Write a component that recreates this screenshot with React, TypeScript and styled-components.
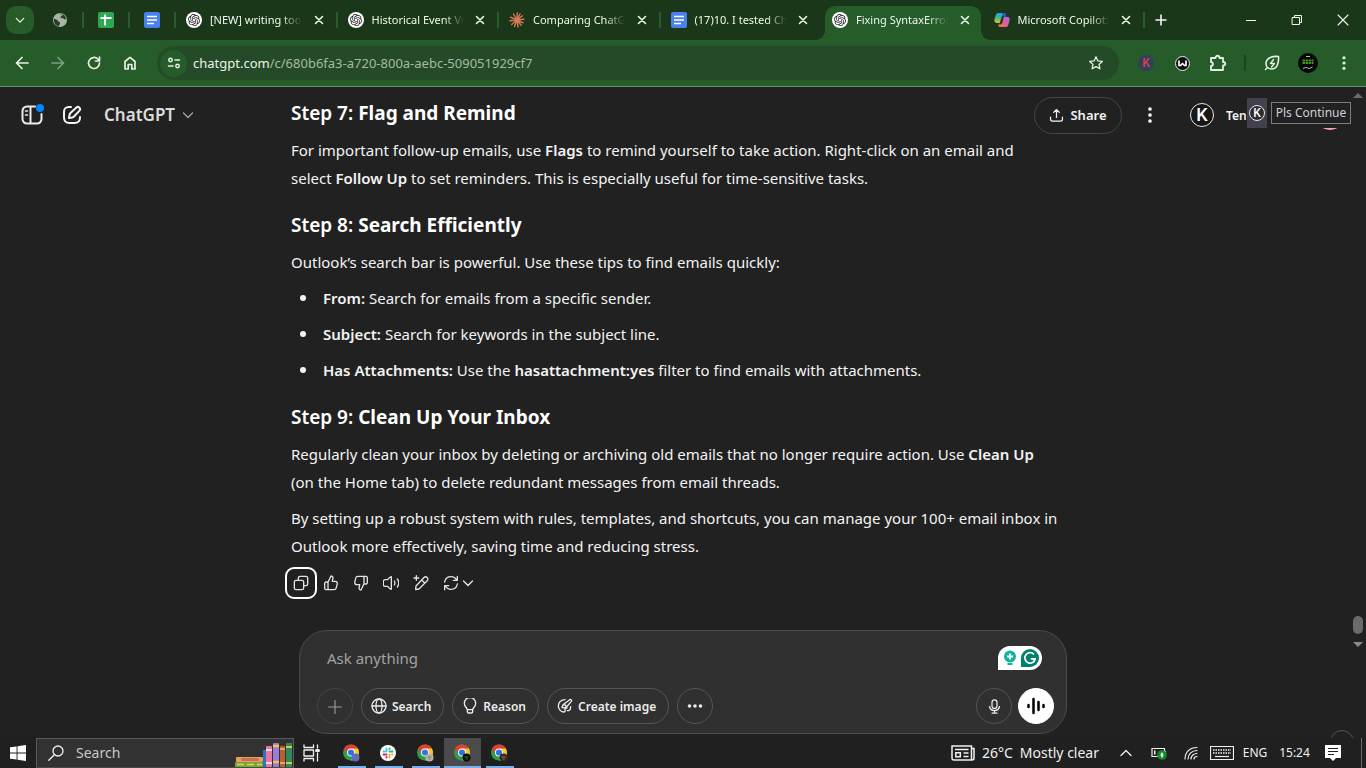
import React from "react";
import styled, { createGlobalStyle, css } from "styled-components";
import { SiOpenai } from "react-icons/si";

const GlobalStyle = createGlobalStyle`
  *, *::before, *::after { box-sizing: border-box; }
  body { margin: 0; background: #212121; font-family: "Noto Sans", "Open Sans", sans-serif; color: #f3f3f3; }
  button, input, textarea { font: inherit; color: inherit; margin: 0; padding: 0; border: 0; background: none; }
  textarea, input { outline: none; }
  svg { display: block; flex: none; }
  h3, p, ul { margin: 0; padding: 0; }
`;

const Screen = styled.div`
  display: flex;
  flex-direction: column;
  height: 100vh;
  overflow: hidden;
`;

/* ---------- browser chrome ---------- */

const TabStrip = styled.div`
  display: flex;
  align-items: stretch;
  height: 40px;
  flex: none;
  padding-left: 6px;
  background: #1b371a;
`;

const TabSearch = styled.button`
  display: grid;
  place-items: center;
  width: 28px;
  height: 28px;
  margin: 6px 4px 0 0;
  border-radius: 10px;
  background: #265c2a;
`;

const separator = css`
  &::after {
    content: "";
    flex: none;
    width: 2px;
    height: 16px;
    background: #2a5a2d;
  }
`;

const PinnedTab = styled.button`
  display: flex;
  align-items: center;
  justify-content: space-between;
  width: 46px;
  flex: none;
  padding-left: 14px;
  ${separator}
`;

const TabList = styled.div`
  display: flex;
  flex: 0 1 969px;
  min-width: 0;
`;

const Tab = styled.div<{ $active?: boolean; $bare?: boolean }>`
  position: relative;
  z-index: 0;
  display: flex;
  align-items: center;
  gap: 8px;
  flex: 1 1 0;
  min-width: 0;
  padding-left: 10px;
  font-size: 11px;
  line-height: 16px;
  color: #eef7ec;
  ${separator}
  ${(p) => (p.$bare || p.$active) && css`&::after { background: transparent; }`}
  ${(p) =>
    p.$active &&
    css`
      &::before {
        content: "";
        position: absolute;
        z-index: -1;
        inset: 6px 3px 0;
        border-radius: 10px 10px 0 0;
        background: #265c2a;
      }
    `}
`;

const TabFoot = styled.span<{ $side: "left" | "right" }>`
  position: absolute;
  z-index: -1;
  bottom: 0;
  ${(p) => p.$side}: -7px;
  width: 10px;
  height: 10px;
  background: radial-gradient(circle at ${(p) => p.$side} top, transparent 10px, #265c2a 10px);
`;

const TabTitle = styled.button`
  flex: 1;
  min-width: 0;
  overflow: hidden;
  white-space: nowrap;
  text-align: left;
  mask-image: linear-gradient(90deg, #000 72px, transparent 92px);
`;

const CloseTab = styled.button`
  display: grid;
  place-items: center;
  width: 16px;
  height: 16px;
  flex: none;
`;

const TabClose = styled(CloseTab)`
  margin-right: 1px;
`;

const NewTab = styled(CloseTab)`
  width: 32px;
  height: 40px;
`;

const WindowControls = styled.div`
  display: flex;
  margin-left: auto;
`;

const WindowButton = styled.button`
  display: grid;
  place-items: center;
  width: 46px;
  height: 40px;
`;

const Toolbar = styled.div`
  display: flex;
  align-items: center;
  height: 47px;
  flex: none;
  padding: 0 4px;
  background: #265c2a;
  border-bottom: 1px solid #6f8b70;
  color: #e6f1e3;
`;

const ToolButton = styled.button<{ $dim?: boolean }>`
  display: grid;
  place-items: center;
  width: 36px;
  height: 36px;
  flex: none;
  opacity: ${(p) => (p.$dim ? 0.45 : 1)};
`;

const Omnibox = styled.div`
  display: flex;
  align-items: center;
  flex: 1;
  min-width: 0;
  height: 34px;
  margin: 0 9px;
  padding: 0 15px 0 3px;
  border-radius: 17px;
  background: #244a28;
  font-size: 13px;
  line-height: 20px;
`;

const SiteInfo = styled.button`
  display: grid;
  place-items: center;
  width: 27px;
  height: 27px;
  margin-right: 6px;
  border-radius: 50%;
  background: #265c2a;
`;

const Address = styled.div`
  flex: 1;
  color: #a3bba3;
  b { font-weight: 400; color: #eaf4e8; }
`;

const Extensions = styled.div`
  display: flex;
  align-items: center;
`;

const Divider = styled.span`
  width: 2px;
  height: 16px;
  margin: 0 8px;
  background: #1d4420;
`;

const Badge = styled.span<{ $bg: string; $fg: string; $size: number; $ring?: boolean }>`
  display: grid;
  place-items: center;
  flex: none;
  width: ${(p) => p.$size}px;
  height: ${(p) => p.$size}px;
  border-radius: 50%;
  border: ${(p) => (p.$ring ? "1px solid #e8e8e8" : "0")};
  background: ${(p) => p.$bg};
  color: ${(p) => p.$fg};
  font: 500 ${(p) => (p.$size > 20 ? 18 : 12)}px/1 Roboto, sans-serif;
`;

/* ---------- page ---------- */

const Main = styled.main`
  display: grid;
  grid-template: minmax(0, 1fr) / minmax(0, 1fr);
  flex: 1;
  min-height: 0;
  position: relative;
  overflow: hidden;
  > * { grid-area: 1 / 1; }
`;

const ScrollArea = styled.div`
  display: flex;
  padding-bottom: 89px;
  min-height: 0;
`;

const Thread = styled.article`
  flex: 1;
  padding-top: 13px;
  > * {
    max-width: 768px;
    margin-left: auto;
    margin-right: auto;
  }
`;

const Heading = styled.h3`
  margin-bottom: 10px;
  font-size: 19px;
  line-height: 26px;
  font-weight: 600;
  color: #fff;
  * + & { margin-top: 20px; }
  strong { font-weight: 700; }
`;

const Para = styled.p`
  font-size: 15px;
  line-height: 28px;
  & + & { margin-top: 8px; }
  strong { font-weight: 600; }
`;

const Bullets = styled.ul`
  list-style: none;
`;

const Bullet = styled.li`
  display: flex;
  align-items: center;
  margin-top: 8px;
  font-size: 15px;
  line-height: 28px;
  strong { font-weight: 600; }
  &::before {
    content: "";
    width: 6px;
    height: 6px;
    margin: 0 17px 0 9px;
    border-radius: 50%;
    background: #f3f3f3;
  }
`;

const Actions = styled.div`
  display: flex;
  padding-top: 8px;
  color: #e3e3e3;
`;

const ActionButton = styled.button<{ $focused?: boolean }>`
  display: flex;
  align-items: center;
  gap: 3px;
  height: 30px;
  padding: 0 7px;
  border-radius: 8px;
  outline: ${(p) => (p.$focused ? "2px solid #fff" : "0")};
  outline-offset: -1px;
  &:first-child { margin-left: -5px; }
`;

const Scrollbar = styled.div`
  display: flex;
  flex-direction: column;
  align-items: center;
  width: 16px;
  padding: 6px 0 2px;
  &::before, &::after {
    content: "";
    border: 5px solid transparent;
    border-top-width: 0;
    border-bottom-color: #6b6b6b;
  }
  &::after {
    border-top: 5px solid #8a8a8a;
    border-bottom-width: 0;
  }
`;

const Thumb = styled.span`
  width: 10px;
  height: 18px;
  margin: auto 0 8px;
  border-radius: 5px;
  background: #6b6b6b;
`;

const Header = styled.header`
  display: flex;
  align-items: center;
  align-self: start;
  height: 56px;
  padding: 0 21px 0 12px;
  pointer-events: none;
  button { pointer-events: auto; }
`;

const IconButton = styled.button`
  display: grid;
  place-items: center;
  width: 40px;
  height: 36px;
  flex: none;
`;

const ModelButton = styled.button`
  display: flex;
  align-items: center;
  gap: 7px;
  padding-left: 12px;
  font-size: 17px;
  line-height: 24px;
  font-weight: 600;
  color: #dcdcdc;
  svg { color: #a0a0a0; }
`;

const ShareButton = styled.button`
  display: flex;
  align-items: center;
  justify-content: center;
  gap: 6px;
  width: 88px;
  height: 37px;
  margin: 0 8px 0 auto;
  border: 1px solid #454545;
  border-radius: 19px;
  font-size: 13px;
  font-weight: 600;
`;

const AccountButton = styled.button`
  display: flex;
  align-items: center;
  gap: 12px;
  width: 135px;
  padding-left: 10px;
  margin-left: 10px;
  font-size: 12px;
  font-weight: 600;
`;

const AccountName = styled.span`
  width: 21px;
  overflow: hidden;
  white-space: nowrap;
  text-align: left;
`;

const Avatar = styled.span`
  width: 30px;
  height: 30px;
  border-radius: 50%;
  background: #f0a0c8;
`;

const Snippet = styled.div`
  position: absolute;
  top: 11px;
  right: 15px;
  display: flex;
  align-items: center;
  gap: 4px;
  height: 30px;
  background: #212121;
`;

const SnippetIcon = styled.button`
  display: grid;
  place-items: center;
  width: 20px;
  height: 30px;
  background: #43424c;
`;

const SnippetText = styled.button`
  width: 80px;
  height: 22px;
  border: 1px solid #7c7c80;
  font-size: 12px;
  line-height: 20px;
  white-space: nowrap;
  color: #cfd0dc;
`;

const HelpButton = styled.button`
  position: absolute;
  right: 12px;
  bottom: -16px;
  width: 24px;
  height: 24px;
  border: 1px solid #555;
  border-radius: 50%;
`;

const Composer = styled.form`
  align-self: end;
  justify-self: center;
  display: flex;
  flex-direction: column;
  justify-content: space-between;
  width: 100%;
  max-width: 768px;
  height: 104px;
  margin-bottom: 4px;
  padding: 15px 12px 9px 17px;
  border: 1px solid #4c4c4c;
  border-radius: 28px;
  background: #303030;
`;

const PromptRow = styled.div`
  display: flex;
  justify-content: space-between;
  padding: 0 12px 0 10px;
`;

const Prompt = styled.textarea`
  flex: 1;
  height: 24px;
  resize: none;
  overflow: hidden;
  font-size: 15px;
  line-height: 24px;
  &::placeholder { color: #a3a3a3; opacity: 1; }
`;

const Grammar = styled.button`
  display: flex;
  align-items: center;
  justify-content: space-between;
  width: 44px;
  height: 24px;
  padding: 0 3px 0 5px;
  border-radius: 12px 12px 12px 0;
  background: #fff;
`;

const ToolRow = styled.div`
  display: flex;
  gap: 8px;
`;

const Pill = styled.button<{ $round?: boolean; $solid?: boolean }>`
  display: flex;
  align-items: center;
  justify-content: center;
  gap: 5px;
  height: 36px;
  width: ${(p) => (p.$round ? "36px" : "auto")};
  padding: ${(p) => (p.$round ? 0 : "0 12px 0 9px")};
  border: 1px solid ${(p) => (p.$solid ? "#fff" : "#555")};
  border-radius: 18px;
  background: ${(p) => (p.$solid ? "#fff" : "transparent")};
  color: ${(p) => (p.$solid ? "#000" : "#ececec")};
  font-size: 12px;
  font-weight: 600;
  white-space: nowrap;
`;

const AttachPill = styled(Pill)`
  border-color: #444;
  color: #9a9a9a;
  padding-top: 2px;
`;

const VoiceGroup = styled.div`
  display: flex;
  gap: 6px;
  margin-left: auto;
`;

/* ---------- taskbar ---------- */

const Taskbar = styled.footer`
  display: flex;
  align-items: stretch;
  height: 30px;
  flex: none;
  background: #202020;
  color: #f0f0f0;
`;

const TaskButton = styled.button<{ $w: number }>`
  display: grid;
  place-items: center;
  flex: none;
  width: ${(p) => p.$w}px;
`;

const TaskView = styled.button`
  display: flex;
  align-items: center;
  flex: none;
  width: 39px;
  padding-left: 8px;
`;

const TaskSearch = styled.label`
  display: flex;
  align-items: center;
  gap: 12px;
  width: 258px;
  padding-left: 11px;
  border: 1px solid #5a5a5a;
  border-bottom-color: #4a4a4a;
  background: #323232;
  font-size: 14px;
  line-height: 20px;
  input { flex: 1; min-width: 0; }
  input::placeholder { color: #c9c9c9; opacity: 1; }
`;

const RunningApp = styled.button<{ $active?: boolean }>`
  display: grid;
  place-items: center;
  width: 37px;
  padding-right: 1px;
  background:
    linear-gradient(#76b0ee, #76b0ee) bottom / ${(p) => (p.$active ? "100%" : "28px")} 2px no-repeat,
    ${(p) => (p.$active ? "#4b4b4b" : "transparent")};
`;

const Tray = styled.div`
  display: flex;
  align-items: center;
  margin-left: auto;
  padding-right: 4px;
`;

const Weather = styled.button`
  display: flex;
  align-items: center;
  gap: 7px;
  padding-right: 9px;
  font-size: 14px;
  line-height: 20px;
  white-space: nowrap;
`;

const TrayText = styled.button<{ $w: number }>`
  width: ${(p) => p.$w}px;
  font-size: 12px;
  line-height: 20px;
`;

const ShowDesktop = styled.span`
  width: 1px;
  height: 30px;
  margin-left: 9px;
  background: #6a6a6a;
`;

/* ---------- icons ---------- */

type LineProps = { size?: number; w?: number; children: React.ReactNode; box?: number };
const Line = ({ size = 18, w = 2, box = 24, children }: LineProps) => (
  <svg width={size} height={size} viewBox={`0 0 ${box} ${box}`} fill="none" stroke="currentColor" strokeWidth={w} strokeLinecap="round" strokeLinejoin="round" aria-hidden="true">
    {children}
  </svg>
);

const Cross = () => <Line size={12} box={12} w={1.6}><path d="M2.5 2.5l7 7M9.5 2.5l-7 7" /></Line>;
const Chevron = ({ size = 12 }: { size?: number }) => <Line size={size} box={12} w={1.4}><path d="M1.500 4L6 8.500 10.500 4" /></Line>;
const Dots = ({ size = 14 }: { size?: number }) => (
  <svg width={size} height={size} viewBox="0 0 20 20" fill="currentColor"><circle cx="10" cy="2.500" r="2.300" /><circle cx="10" cy="10" r="2.300" /><circle cx="10" cy="17.500" r="2.300" /></svg>
);

const GptIcon = () => (
  <Badge $bg="#fff" $fg="#222" $size={16}><SiOpenai size={12} /></Badge>
);
const DocsIcon = () => (
  <svg width="16" height="16" viewBox="0 0 16 16"><rect width="16" height="16" rx="2" fill="#4a80ee" /><path d="M3 4.500h10M3 8h10M3 11.500h7" stroke="#fff" strokeWidth="1.700" /></svg>
);
const SheetsIcon = () => (
  <svg width="16" height="16" viewBox="0 0 16 16"><rect width="16" height="16" rx="2" fill="#2fa650" /><path d="M2.500 6h11M7 2.500v11" stroke="#fff" strokeWidth="1.800" /></svg>
);
const GlobeIcon = () => (
  <svg width="16" height="16" viewBox="0 0 16 16"><circle cx="8" cy="8" r="7" fill="#a9b3a8" /><path d="M2 7c2 0 3 .5 4 2s2 .5 2 2-1 1.500-1 3.200C4 14 1.500 11.500 2 7zM7 2c1 .5 3 0 4 .8-.5 1.200-2 1-2.500 2.200s1.500 1.200 2.500 1.200 1.500 1.500 3 1.300C14 4 11 1.200 7 2z" fill="#24402a" /></svg>
);
const ClaudeIcon = () => (
  <svg width="16" height="16" viewBox="0 0 16 16" stroke="#d97757" strokeWidth="1.400" strokeLinecap="round">
    <path d="M8 8L8.300 1M8 8l3-6M8 8l5.500-4.200M8 8l7-.8M8 8l6.200 2.800M8 8l4.200 5.200M8 8l1 7M8 8l-2.500 6.500M8 8l-5.300 4.500M8 8l-7 .8M8 8L1.500 5.200M8 8L4.500 2" />
  </svg>
);
const CopilotIcon = () => (
  <svg width="16" height="16" viewBox="0 0 18 16">
    <defs>
      <linearGradient id="cpA" x1="0" y1="0" x2="0" y2="1"><stop offset="0" stopColor="#1aa4f0" /><stop offset=".5" stopColor="#47b88a" /><stop offset="1" stopColor="#f5b824" /></linearGradient>
      <linearGradient id="cpB" x1="1" y1="0" x2="0" y2="1"><stop offset="0" stopColor="#a46bf0" /><stop offset=".5" stopColor="#e85a9c" /><stop offset="1" stopColor="#f5793b" /></linearGradient>
    </defs>
    <path d="M5 0h6c1.500 0 1.800 1 2.200 2.500H11c-1.500 0-2 1-2.500 2.500L6.500 11.500H3C.5 11.500 0 9 .6 7L2 2.500C2.600 1 3.500 0 5 0z" fill="url(#cpA)" />
    <path d="M13 16H7c-1.500 0-2-1-2.300-3H7c1.500 0 2-1 2.500-2.500L11 4.500h4c2.500 0 3 2 2.400 4L16 14c-.6 1.500-1.500 2-3 2z" fill="url(#cpB)" />
    <path d="M9 0h2.500c1 0 1.500 1 1.800 2.500L14 4.500h-3z" fill="#2456d8" />
  </svg>
);

const ChromeIcon = ({ badge }: { badge: string }) => (
  <svg width="18" height="18" viewBox="0 0 18 18">
    <circle cx="9" cy="8.500" r="8" fill="#2f9e4b" />
    <path d="M9 8.500L2.100 4.500A8 8 0 0 1 15.900 4.500z" fill="#e1402f" />
    <path d="M9 4.500h6.900A8 8 0 0 1 9 16.500l3.500-6z" fill="#f8c62c" />
    <path d="M2.100 4.500L6 11l3-2.500v-4z" fill="#e1402f" />
    <circle cx="9" cy="8.500" r="4" fill="#fff" /><circle cx="9" cy="8.500" r="3.100" fill="#2f74e0" />
    <circle cx="13.500" cy="13.500" r="4" fill={badge} />
    <path d="M11.500 13h4M12.500 15h2" stroke={badge === "#0b0b0b" ? "#2f7e10" : "#87706a"} />
  </svg>
);
const SlackIcon = () => (
  <svg width="16" height="16" viewBox="0 0 16 16" strokeWidth="1.900" strokeLinecap="round">
    <circle cx="8" cy="8" r="8" fill="#fff" />
    <path d="M6.500 3.500v3M3.500 6.500h1" stroke="#36c5f0" /><path d="M9.500 6.500h3M9.500 3.500v.5" stroke="#2eb67d" />
    <path d="M9.500 9.500v3M12 9.500h.5" stroke="#ecb22e" /><path d="M3.500 9.500h3M6.500 12v.5" stroke="#e01e5a" />
  </svg>
);
const Books = () => (
  <svg width="58" height="28" viewBox="0 0 58 28">
    <rect x="1" y="18" width="27" height="5" rx="1" fill="#e7a05c" /><rect x="6" y="19" width="18" height="3" rx="1.500" fill="#c96f5a" />
    <rect x="0" y="23" width="28" height="5" rx="1" fill="#79a832" /><path d="M2 25.500h25" stroke="#d9d469" strokeWidth="1.500" strokeDasharray="7 3" />
    <rect x="28" y="11" width="3" height="17" fill="#2f6fc4" /><rect x="31" y="7" width="6" height="21" rx="1" fill="#e07aa0" /><path d="M31 11h6M31 24h6" stroke="#fbd3df" strokeWidth="2" />
    <rect x="38" y="4" width="6" height="24" rx="1" fill="#9d7bd8" /><path d="M38 7h6M38 23h6" stroke="#f2c14e" strokeWidth="2.500" />
    <rect x="45" y="7" width="5" height="21" rx="1" fill="#b5622f" /><path d="M45 10h5M45 24h5" stroke="#e9a25d" strokeWidth="2" />
    <rect x="51" y="4" width="6" height="24" rx="1" fill="#2e8b57" /><path d="M51 8h6M51 24h6" stroke="#d8c35a" strokeWidth="2" />
  </svg>
);

const tabs = [
  { title: "[NEW] writing tools", icon: <GptIcon /> },
  { title: "Historical Event Video", icon: <GptIcon /> },
  { title: "Comparing ChatGPT", icon: <ClaudeIcon /> },
  { title: "(17)10. I tested Chat", icon: <DocsIcon />, bare: true },
  { title: "Fixing SyntaxError in", icon: <GptIcon />, active: true },
  { title: "Microsoft Copilot: Your", icon: <CopilotIcon /> },
];

function Browser() {
  return (
    <>
      <TabStrip>
        <TabSearch aria-label="Search tabs"><Chevron size={10} /></TabSearch>
        <PinnedTab aria-label="Globe tab"><GlobeIcon /></PinnedTab>
        <PinnedTab aria-label="Sheets tab"><SheetsIcon /></PinnedTab>
        <PinnedTab aria-label="Docs tab"><DocsIcon /></PinnedTab>
        <TabList>
          {tabs.map((t) => (
            <Tab key={t.title} $active={t.active} $bare={t.bare}>
              {t.active && <><TabFoot $side="left" /><TabFoot $side="right" /></>}
              {t.icon}
              <TabTitle>{t.title}</TabTitle>
              <TabClose aria-label="Close tab"><Cross /></TabClose>
            </Tab>
          ))}
        </TabList>
        <NewTab aria-label="New tab"><Line size={12} box={12} w={1.600}><path d="M6 1v10M1 6h10" /></Line></NewTab>
        <WindowControls>
          <WindowButton aria-label="Minimize"><Line size={10} box={10} w={1}><path d="M0 5.500h10" /></Line></WindowButton>
          <WindowButton aria-label="Restore"><Line size={12} box={12} w={1}><path d="M1.500 3.500h7v7h-7zM3.500 3.500v-2h7v7h-2" /></Line></WindowButton>
          <WindowButton aria-label="Close"><Line size={12} box={12} w={1.100}><path d="M1 1l10 10M11 1L1 11" /></Line></WindowButton>
        </WindowControls>
      </TabStrip>
      <Toolbar>
        <ToolButton aria-label="Back"><Line size={16} box={16} w={1.700}><path d="M14 8H2.500M8 2.500L2.500 8 8 13.500" /></Line></ToolButton>
        <ToolButton aria-label="Forward" $dim><Line size={16} box={16} w={1.700}><path d="M2 8h11.500M8 2.500L13.500 8 8 13.500" /></Line></ToolButton>
        <ToolButton aria-label="Reload"><Line size={16} box={16} w={1.700}><path d="M13.500 8A5.500 5.500 0 1 1 11.800 4L13.500 5.600M13.500 2v4h-4" /></Line></ToolButton>
        <ToolButton aria-label="Home"><Line size={16} box={16} w={1.700}><path d="M3 6.500L8 2.300l5 4.200V14H9.800V9.500H6.200V14H3z" /></Line></ToolButton>
        <Omnibox>
          <SiteInfo aria-label="Site information"><Line size={14} box={14} w={1.500}><circle cx="3.500" cy="4" r="1.700" /><path d="M8 4h4.500M1.500 10H6" /><circle cx="10.500" cy="10" r="1.700" /></Line></SiteInfo>
          <Address role="textbox" aria-label="Address" contentEditable suppressContentEditableWarning><b>chatgpt.com</b>/c/680b6fa3-a720-800a-aebc-509051929cf7</Address>
          <CloseTab aria-label="Bookmark"><Line size={16} box={16} w={1.300}><path d="M8 1.800l1.900 4.100 4.400.5-3.300 3 .9 4.400L8 11.600l-3.900 2.200.9-4.400-3.300-3 4.400-.5z" /></Line></CloseTab>
        </Omnibox>
        <Extensions>
          <ToolButton aria-label="Extension K"><Badge $bg="#34405a" $fg="#d8434b" $size={16}>K</Badge></ToolButton>
          <ToolButton aria-label="Extension W"><Badge $bg="#111" $fg="#fff" $size={15} $ring><Line size={9} box={9} w={1.700}><path d="M1 2v4.500h1.500L4.500 4.500l2 2H8V2" /></Line></Badge></ToolButton>
          <ToolButton aria-label="Extensions"><Line size={18} box={18} w={1.800}><path d="M2 4h4.500c0-3 4-3 4 0H14v4c3 0 3 3.500 0 3.500V16H2v-4c2.600 0 2.600-4 0-4z" /></Line></ToolButton>
          <Divider />
          <ToolButton aria-label="Energy saver"><Line size={16} box={16} w={1.600}><path d="M14.500 1.500C8 1 2 3 2 8.500c0 3.300 2.500 5.500 5.500 5.500 5.500 0 7.500-5.500 7-12.500zM3.500 12.500L1.500 14.500" /><path d="M9.500 4.500L6.500 8.500h4L7.500 12" strokeWidth="1.300" /></Line></ToolButton>
          <ToolButton aria-label="Profile">
            <svg width="20" height="20" viewBox="0 0 20 20"><circle cx="10" cy="10" r="10" fill="#080808" /><path d="M4.500 7.500h11M4.500 10h11" stroke="#3c9a12" strokeWidth="2" strokeDasharray="2.500 .6" /><path d="M8 3.500h4M5 15.500q3-2 4.500-.5t5-1" stroke="#b9b9b9" fill="none" /></svg>
          </ToolButton>
          <ToolButton aria-label="Browser menu"><Dots /></ToolButton>
        </Extensions>
      </Toolbar>
    </>
  );
}

function Conversation() {
  return (
    <ScrollArea>
      <Thread>
        <Heading>Step 7: <strong>Flag and Remind</strong></Heading>
        <Para>For important follow-up emails, use <strong>Flags</strong> to remind yourself to take action. Right-click on an email and<br />select <strong>Follow Up</strong> to set reminders. This is especially useful for time-sensitive tasks.</Para>
        <Heading>Step 8: <strong>Search Efficiently</strong></Heading>
        <Para>Outlook’s search bar is powerful. Use these tips to find emails quickly:</Para>
        <Bullets>
          <Bullet><span><strong>From:</strong> Search for emails from a specific sender.</span></Bullet>
          <Bullet><span><strong>Subject:</strong> Search for keywords in the subject line.</span></Bullet>
          <Bullet><span><strong>Has Attachments:</strong> Use the <strong>hasattachment:yes</strong> filter to find emails with attachments.</span></Bullet>
        </Bullets>
        <Heading>Step 9: <strong>Clean Up Your Inbox</strong></Heading>
        <Para>Regularly clean your inbox by deleting or archiving old emails that no longer require action. Use <strong>Clean Up</strong><br />(on the Home tab) to delete redundant messages from email threads.</Para>
        <Para>By setting up a robust system with rules, templates, and shortcuts, you can manage your 100+ email inbox in<br />Outlook more effectively, saving time and reducing stress.</Para>
        <Actions>
          <ActionButton $focused aria-label="Copy"><Line size={16}><rect x="2" y="8" width="14" height="14" rx="2.500" /><path d="M8 8V4.500A2.500 2.500 0 0 1 10.500 2h9A2.500 2.500 0 0 1 22 4.500v9a2.500 2.500 0 0 1-2.500 2.500H16" /></Line></ActionButton>
          <ActionButton aria-label="Good response"><Line size={16}><path d="M7.500 22H4.500a2 2 0 0 1-2-2v-7.500a2 2 0 0 1 2-2h3zM7.500 11L12 1.500c2.500.3 3.300 2 2.800 4L14 9.500h4.300c2.200 0 3.500 1.600 3 3.700l-1.400 6A3.500 3.500 0 0 1 16.500 22h-9z" /></Line></ActionButton>
          <ActionButton aria-label="Bad response"><Line size={16}><path d="M16.500 2h3a2 2 0 0 1 2 2v7.500a2 2 0 0 1-2 2h-3zM16.500 13L12 22.500c-2.500-.3-3.300-2-2.800-4l.8-4H5.700c-2.200 0-3.500-1.600-3-3.700l1.400-6A3.500 3.500 0 0 1 7.500 2h9z" /></Line></ActionButton>
          <ActionButton aria-label="Read aloud"><Line size={16}><path d="M12.500 2.500v19c-2.500-.5-4-2.500-5.500-4.500H3a2.500 2.500 0 0 1-2.500-2.500v-5A2.500 2.500 0 0 1 3 7h4c1.500-2 3-4 5.500-4.500zM17 9c1.200 2 1.200 4 0 6M21.500 6c2.500 3.500 2.500 8.500 0 12" /></Line></ActionButton>
          <ActionButton aria-label="Edit in canvas"><Line size={16}><path d="M4 22l.5-5.500L16.500 3.800a3.300 3.300 0 0 1 4.800 4.800L9 21zM13 7.500l4.500 4.500" /><path d="M5 1v7M1.500 4.500h7" /></Line></ActionButton>
          <ActionButton aria-label="Regenerate"><Line size={16}><path d="M2.500 10.500C3.500 5 8 2.500 12 2.500c3.500 0 6.500 1.500 8.500 5M21.500 2v6H15.500M21.500 13.500c-1 5.500-5.500 8-9.500 8-3.500 0-6.500-1.500-8.500-5M2.500 22v-6h6" /></Line><Chevron /></ActionButton>
        </Actions>
      </Thread>
      <Scrollbar aria-hidden="true"><Thumb /></Scrollbar>
    </ScrollArea>
  );
}

function PageHeader() {
  return (
    <Header>
      <IconButton aria-label="Open sidebar">
        <svg width="24" height="24" viewBox="0 0 24 24" fill="none" stroke="#ececec" strokeWidth="2" strokeLinecap="round"><path d="M15 3.500H7A4.500 4.500 0 0 0 2.500 8v8A4.500 4.500 0 0 0 7 20.500h10a4.500 4.500 0 0 0 4.500-4.500v-5M10.500 3.500v17" /><path d="M5.500 8h2M5.500 12h2" strokeWidth="1.500" /><circle cx="20" cy="5" r="4" fill="#0285ff" stroke="none" /></svg>
      </IconButton>
      <IconButton aria-label="New chat"><Line size={24}><path d="M11 4H9C5 4 4 5.500 4 9.500v5C4 18.500 5.500 20 9.500 20h5c4 0 5.500-1.500 5.500-5.500V14" /><path d="M9 15l.5-3.200a4 4 0 0 1 1-1.800l5.900-5.500a2.200 2.200 0 0 1 3.100 3.100L14 13.500a4 4 0 0 1-1.800 1z" /></Line></IconButton>
      <ModelButton>ChatGPT <Chevron size={12} /></ModelButton>
      <ShareButton><Line size={15}><path d="M12 15V2.500M7.500 7L12 2.500 16.500 7M2.500 14.500V18a3 3 0 0 0 3 3h13a3 3 0 0 0 3-3v-3.500" /></Line>Share</ShareButton>
      <IconButton aria-label="More"><Dots size={16} /></IconButton>
      <AccountButton><Badge $bg="#171717" $fg="#fff" $size={24} $ring>K</Badge><AccountName>Ten</AccountName></AccountButton>
      <Avatar />
    </Header>
  );
}

function PromptBox() {
  return (
    <Composer>
      <PromptRow>
        <Prompt aria-label="Prompt" placeholder="Ask anything" />
        <Grammar type="button" aria-label="Writing assistant">
          <svg width="14" height="16" viewBox="0 0 14 16"><circle cx="7" cy="6.500" r="6" fill="#12b39a" /><path d="M7 3.500v6M4 6.500h6" stroke="#fff" strokeWidth="1.800" /><path d="M4.500 14h5" stroke="#12b39a" strokeWidth="2" /></svg>
          <svg width="18" height="18" viewBox="0 0 18 18"><path d="M9 0a9 9 0 1 1 0 18H0V9a9 9 0 0 1 9-9z" fill="#027e6f" /><path d="M13 5.500A5.200 5.200 0 1 0 14.200 9.800H9.800M14.200 9.800l-1.800 1.700" stroke="#fff" strokeWidth="1.700" fill="none" /></svg>
        </Grammar>
      </PromptRow>
      <ToolRow>
        <AttachPill $round type="button" aria-label="Attach"><Line size={14}><path d="M12 1v22M1 12h22" /></Line></AttachPill>
        <Pill type="button"><Line size={16}><circle cx="12" cy="12" r="10.500" /><ellipse cx="12" cy="12" rx="4.500" ry="10.500" /><path d="M1.500 12h21" /></Line>Search</Pill>
        <Pill type="button"><Line size={16}><path d="M8 17.500c-.2-1.500-1-2.500-2-3.700a8.500 8.500 0 1 1 12 0c-1 1.200-1.800 2.200-2 3.700zM8 17.500v3a2 2 0 0 0 2 2h4a2 2 0 0 0 2-2v-3" /></Line>Reason</Pill>
        <Pill type="button"><Line size={16}><path d="M12 2.500C6 2.500 2 6.500 2 11.500S6 21 9.500 21c3 0 3-2 2.500-3.500S13 15 15 15" /><path d="M7.500 14c.5-4 3-5 5.500-7l6-4.500c2-1 3.500.5 2.500 2.500l-6 7c-2 2.500-4 4-8 2z" /><path d="M20.500 13c0 4-2 6-5 6M11 9.500l3.500 3.500" /></Line>Create image</Pill>
        <Pill $round type="button" aria-label="More tools"><svg width="16" height="16" viewBox="0 0 16 16" fill="currentColor"><circle cx="2.500" cy="8" r="1.800" /><circle cx="8" cy="8" r="1.800" /><circle cx="13.500" cy="8" r="1.800" /></svg></Pill>
        <VoiceGroup>
          <Pill $round type="button" aria-label="Dictate"><Line size={15}><rect x="8" y="1.500" width="8" height="13.500" rx="4" /><path d="M4 12c1 4.500 4 6.500 8 6.500s7-2 8-6.500M12 18.500v4M8 22.500h8" /></Line></Pill>
          <Pill $round $solid type="button" aria-label="Voice mode"><Line size={18} box={18} w={2.500}><path d="M1.500 8v2M6.500 2v14M11.500 5v8M16.500 8v2" /></Line></Pill>
        </VoiceGroup>
      </ToolRow>
    </Composer>
  );
}

function DesktopBar() {
  return (
    <Taskbar>
      <TaskButton $w={36} aria-label="Start"><svg width="16" height="16" viewBox="0 0 16 16" fill="#fff"><path d="M0 2.300L6.600 1.400v6.200H0zM7.500 1.300L16 0v7.600H7.500zM0 8.400h6.600v6.200L0 13.700zM7.500 8.400H16V16l-8.500-1.300z" /></svg></TaskButton>
      <TaskSearch>
        <Line size={16} box={16} w={1.300}><circle cx="10" cy="6" r="5" /><path d="M6.300 9.700L.8 15.200" /></Line>
        <input type="text" placeholder="Search" aria-label="Search the desktop" />
        <Books />
      </TaskSearch>
      <TaskView aria-label="Task view"><Line size={18} box={18} w={1.300}><path d="M2 1v2.500h9.500V1M2 17v-2.500h9.500V17M2 6h9.500v6H2zM15.500 1v3M15.500 9v8" /><path d="M14.500 6.500h2" strokeWidth="3" /></Line></TaskView>
      <RunningApp aria-label="Chrome, first profile"><ChromeIcon badge="#5a6bc9" /></RunningApp>
      <RunningApp aria-label="Slack"><SlackIcon /></RunningApp>
      <RunningApp aria-label="Chrome, second profile"><ChromeIcon badge="#b9b2a8" /></RunningApp>
      <RunningApp $active aria-label="Chrome, third profile"><ChromeIcon badge="#0b0b0b" /></RunningApp>
      <RunningApp aria-label="Chrome, fourth profile"><ChromeIcon badge="#3a2a24" /></RunningApp>
      <Tray>
        <Weather>
          <svg width="24" height="16" viewBox="0 0 24 16" fill="none" stroke="#f0f0f0" strokeWidth="1.500"><path d="M1 1h19.500v14H3a2 2 0 0 1-2-2zM20.500 3.500H23V13a2 2 0 0 1-2 2h-2M4 4.500h13.500M12.500 8h5M12.500 11.500h5" /><path d="M4.800 7.800h4.500v4H4.800z" /></svg>
          <span>26°C</span><span>Mostly clear</span>
        </Weather>
        <TaskButton $w={36} aria-label="Hidden icons"><Line size={12} box={12} w={1.300}><path d="M1 8.500L6 3.500l5 5" /></Line></TaskButton>
        <TaskButton $w={30} aria-label="Battery"><svg width="16" height="14" viewBox="0 0 16 14"><path d="M1 2.500h12.500v8H1zM14.500 5v3" fill="none" stroke="#f0f0f0" strokeWidth="1.200" /><path d="M3 4.500h1.500v4H3z" fill="#f0f0f0" /><circle cx="11" cy="9" r="4.800" fill="#138a2a" /><path d="M11 6q3 3 0 6q-3-3 0-6z" fill="#cfeccf" /></svg></TaskButton>
        <TaskButton $w={34} aria-label="Network"><Line size={14} box={14} w={1.200}><path d="M1 13C1 6 6 1.500 13 1.500M4 13c0-5 4-8.500 9-8.500M7 13c0-3.500 3-5.500 6-5.500M10 13c0-1.500 1-2.500 3-2.500" /></Line></TaskButton>
        <TaskButton $w={27} aria-label="Touch keyboard"><svg width="24" height="14" viewBox="0 0 24 14" fill="none" stroke="#f0f0f0"><path d="M.5.5h23v13H.5z" strokeWidth="1.200" /><path d="M3 4h18M3 7h18" strokeWidth="1.400" strokeDasharray="1.500 1" /><path d="M5 10.500h14" strokeWidth="1.200" /></svg></TaskButton>
        <TrayText $w={40}>ENG</TrayText>
        <TrayText $w={39}>15:24</TrayText>
        <TaskButton $w={38} aria-label="Notifications"><svg width="16" height="16" viewBox="0 0 16 16"><path d="M0 0h16v13h-5l-3 3-3-3H0z" fill="#fff" /><path d="M3 3.500h10M3 6.500h10M3 9.500h6" stroke="#202020" /></svg></TaskButton>
        <ShowDesktop />
      </Tray>
    </Taskbar>
  );
}

export default function App() {
  return (
    <Screen>
      <GlobalStyle />
      <Browser />
      <Main>
        <Conversation />
        <PageHeader />
        <PromptBox />
        <Snippet>
          <SnippetIcon aria-label="Snippet tool"><Badge $bg="#2b2b33" $fg="#fff" $size={16} $ring>K</Badge></SnippetIcon>
          <SnippetText>Pls Continue</SnippetText>
        </Snippet>
        <HelpButton aria-label="Help" />
      </Main>
      <DesktopBar />
    </Screen>
  );
}
